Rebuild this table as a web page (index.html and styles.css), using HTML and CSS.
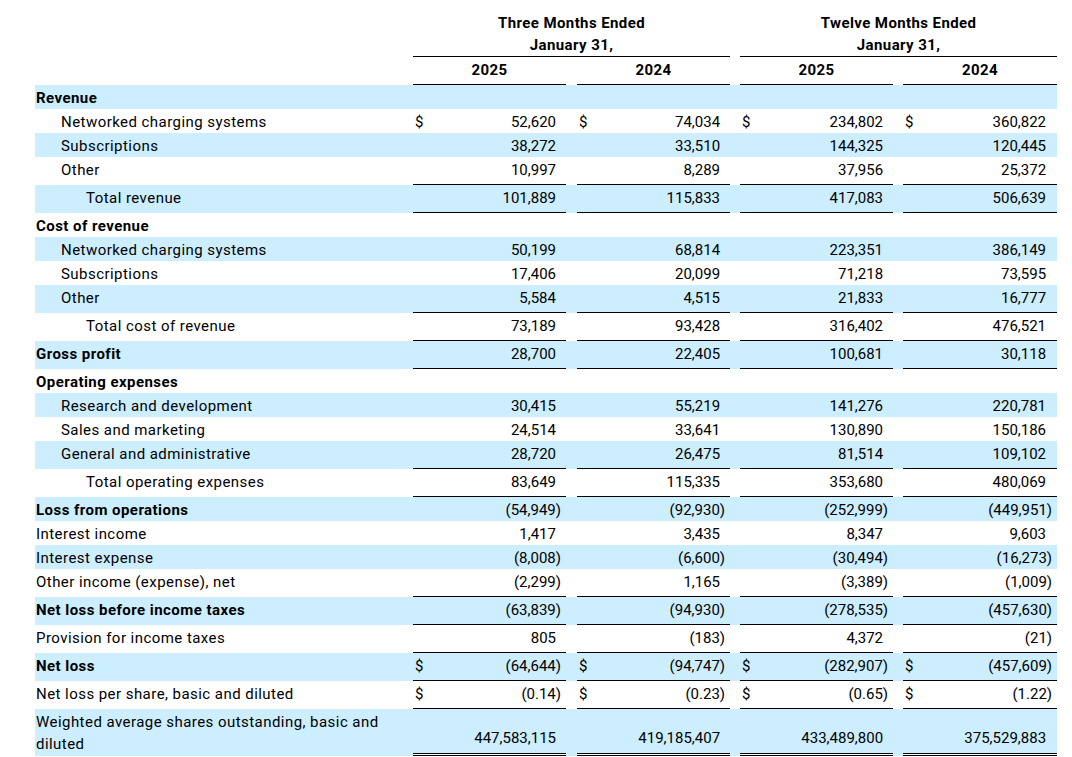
FILE: index.html
```html
<!DOCTYPE html>
<html lang="en">
<head>
  <meta charset="UTF-8" />
  <meta name="viewport" content="width=device-width, initial-scale=1.0" />
  <title>Condensed Consolidated Statements of Operations</title>
  <link rel="stylesheet" href="styles.css">
</head>
<body>
  <table class="ops">
    <colgroup>
      <col class="c-label">
      <col class="c-cur"><col class="c-num">
      <col class="c-gap1">
      <col class="c-cur"><col class="c-num">
      <col class="c-gap">
      <col class="c-cur"><col class="c-num">
      <col class="c-gap">
      <col class="c-cur"><col class="c-num4">
    </colgroup>
    <thead>
      <tr class="head-period">
        <th></th>
        <th colspan="5" class="period">Three Months Ended<br>January 31,</th>
        <th></th>
        <th colspan="5" class="period">Twelve Months Ended<br>January 31,</th>
      </tr>
      <tr class="head-year">
        <th></th>
        <th colspan="2" class="year">2025</th>
        <th></th>
        <th colspan="2" class="year">2024</th>
        <th></th>
        <th colspan="2" class="year">2025</th>
        <th></th>
        <th colspan="2" class="year">2024</th>
      </tr>
    </thead>
    <tbody>
      <tr class="hl">
        <td class="lbl strong">Revenue</td>
        <td class="cur"></td><td class="num"></td><td class="gap"></td>
        <td class="cur"></td><td class="num"></td><td class="gap"></td>
        <td class="cur"></td><td class="num"></td><td class="gap"></td>
        <td class="cur"></td><td class="num"></td>
      </tr>
      <tr>
        <td class="lbl l1">Networked charging systems</td>
        <td class="cur">$</td><td class="num">52,620</td><td class="gap"></td>
        <td class="cur">$</td><td class="num">74,034</td><td class="gap"></td>
        <td class="cur">$</td><td class="num">234,802</td><td class="gap"></td>
        <td class="cur">$</td><td class="num">360,822</td>
      </tr>
      <tr class="hl">
        <td class="lbl l1">Subscriptions</td>
        <td class="cur"></td><td class="num">38,272</td><td class="gap"></td>
        <td class="cur"></td><td class="num">33,510</td><td class="gap"></td>
        <td class="cur"></td><td class="num">144,325</td><td class="gap"></td>
        <td class="cur"></td><td class="num">120,445</td>
      </tr>
      <tr class="rule">
        <td class="lbl l1">Other</td>
        <td class="cur"></td><td class="num">10,997</td><td class="gap"></td>
        <td class="cur"></td><td class="num">8,289</td><td class="gap"></td>
        <td class="cur"></td><td class="num">37,956</td><td class="gap"></td>
        <td class="cur"></td><td class="num">25,372</td>
      </tr>
      <tr class="hl rule">
        <td class="lbl l2">Total revenue</td>
        <td class="cur"></td><td class="num">101,889</td><td class="gap"></td>
        <td class="cur"></td><td class="num">115,833</td><td class="gap"></td>
        <td class="cur"></td><td class="num">417,083</td><td class="gap"></td>
        <td class="cur"></td><td class="num">506,639</td>
      </tr>
      <tr>
        <td class="lbl strong">Cost of revenue</td>
        <td class="cur"></td><td class="num"></td><td class="gap"></td>
        <td class="cur"></td><td class="num"></td><td class="gap"></td>
        <td class="cur"></td><td class="num"></td><td class="gap"></td>
        <td class="cur"></td><td class="num"></td>
      </tr>
      <tr class="hl">
        <td class="lbl l1">Networked charging systems</td>
        <td class="cur"></td><td class="num">50,199</td><td class="gap"></td>
        <td class="cur"></td><td class="num">68,814</td><td class="gap"></td>
        <td class="cur"></td><td class="num">223,351</td><td class="gap"></td>
        <td class="cur"></td><td class="num">386,149</td>
      </tr>
      <tr>
        <td class="lbl l1">Subscriptions</td>
        <td class="cur"></td><td class="num">17,406</td><td class="gap"></td>
        <td class="cur"></td><td class="num">20,099</td><td class="gap"></td>
        <td class="cur"></td><td class="num">71,218</td><td class="gap"></td>
        <td class="cur"></td><td class="num">73,595</td>
      </tr>
      <tr class="hl rule">
        <td class="lbl l1">Other</td>
        <td class="cur"></td><td class="num">5,584</td><td class="gap"></td>
        <td class="cur"></td><td class="num">4,515</td><td class="gap"></td>
        <td class="cur"></td><td class="num">21,833</td><td class="gap"></td>
        <td class="cur"></td><td class="num">16,777</td>
      </tr>
      <tr class="rule">
        <td class="lbl l2">Total cost of revenue</td>
        <td class="cur"></td><td class="num">73,189</td><td class="gap"></td>
        <td class="cur"></td><td class="num">93,428</td><td class="gap"></td>
        <td class="cur"></td><td class="num">316,402</td><td class="gap"></td>
        <td class="cur"></td><td class="num">476,521</td>
      </tr>
      <tr class="hl rule">
        <td class="lbl strong">Gross profit</td>
        <td class="cur"></td><td class="num">28,700</td><td class="gap"></td>
        <td class="cur"></td><td class="num">22,405</td><td class="gap"></td>
        <td class="cur"></td><td class="num">100,681</td><td class="gap"></td>
        <td class="cur"></td><td class="num">30,118</td>
      </tr>
      <tr>
        <td class="lbl strong">Operating expenses</td>
        <td class="cur"></td><td class="num"></td><td class="gap"></td>
        <td class="cur"></td><td class="num"></td><td class="gap"></td>
        <td class="cur"></td><td class="num"></td><td class="gap"></td>
        <td class="cur"></td><td class="num"></td>
      </tr>
      <tr class="hl">
        <td class="lbl l1">Research and development</td>
        <td class="cur"></td><td class="num">30,415</td><td class="gap"></td>
        <td class="cur"></td><td class="num">55,219</td><td class="gap"></td>
        <td class="cur"></td><td class="num">141,276</td><td class="gap"></td>
        <td class="cur"></td><td class="num">220,781</td>
      </tr>
      <tr>
        <td class="lbl l1">Sales and marketing</td>
        <td class="cur"></td><td class="num">24,514</td><td class="gap"></td>
        <td class="cur"></td><td class="num">33,641</td><td class="gap"></td>
        <td class="cur"></td><td class="num">130,890</td><td class="gap"></td>
        <td class="cur"></td><td class="num">150,186</td>
      </tr>
      <tr class="hl rule">
        <td class="lbl l1">General and administrative</td>
        <td class="cur"></td><td class="num">28,720</td><td class="gap"></td>
        <td class="cur"></td><td class="num">26,475</td><td class="gap"></td>
        <td class="cur"></td><td class="num">81,514</td><td class="gap"></td>
        <td class="cur"></td><td class="num">109,102</td>
      </tr>
      <tr class="rule">
        <td class="lbl l2">Total operating expenses</td>
        <td class="cur"></td><td class="num">83,649</td><td class="gap"></td>
        <td class="cur"></td><td class="num">115,335</td><td class="gap"></td>
        <td class="cur"></td><td class="num">353,680</td><td class="gap"></td>
        <td class="cur"></td><td class="num">480,069</td>
      </tr>
      <tr class="hl">
        <td class="lbl strong">Loss from operations</td>
        <td class="cur"></td><td class="num neg">(54,949)</td><td class="gap"></td>
        <td class="cur"></td><td class="num neg">(92,930)</td><td class="gap"></td>
        <td class="cur"></td><td class="num neg">(252,999)</td><td class="gap"></td>
        <td class="cur"></td><td class="num neg">(449,951)</td>
      </tr>
      <tr>
        <td class="lbl">Interest income</td>
        <td class="cur"></td><td class="num">1,417</td><td class="gap"></td>
        <td class="cur"></td><td class="num">3,435</td><td class="gap"></td>
        <td class="cur"></td><td class="num">8,347</td><td class="gap"></td>
        <td class="cur"></td><td class="num">9,603</td>
      </tr>
      <tr class="hl">
        <td class="lbl">Interest expense</td>
        <td class="cur"></td><td class="num neg">(8,008)</td><td class="gap"></td>
        <td class="cur"></td><td class="num neg">(6,600)</td><td class="gap"></td>
        <td class="cur"></td><td class="num neg">(30,494)</td><td class="gap"></td>
        <td class="cur"></td><td class="num neg">(16,273)</td>
      </tr>
      <tr class="rule">
        <td class="lbl">Other income (expense), net</td>
        <td class="cur"></td><td class="num neg">(2,299)</td><td class="gap"></td>
        <td class="cur"></td><td class="num">1,165</td><td class="gap"></td>
        <td class="cur"></td><td class="num neg">(3,389)</td><td class="gap"></td>
        <td class="cur"></td><td class="num neg">(1,009)</td>
      </tr>
      <tr class="hl rule">
        <td class="lbl strong">Net loss before income taxes</td>
        <td class="cur"></td><td class="num neg">(63,839)</td><td class="gap"></td>
        <td class="cur"></td><td class="num neg">(94,930)</td><td class="gap"></td>
        <td class="cur"></td><td class="num neg">(278,535)</td><td class="gap"></td>
        <td class="cur"></td><td class="num neg">(457,630)</td>
      </tr>
      <tr class="rule">
        <td class="lbl">Provision for income taxes</td>
        <td class="cur"></td><td class="num">805</td><td class="gap"></td>
        <td class="cur"></td><td class="num neg">(183)</td><td class="gap"></td>
        <td class="cur"></td><td class="num">4,372</td><td class="gap"></td>
        <td class="cur"></td><td class="num neg">(21)</td>
      </tr>
      <tr class="hl rule">
        <td class="lbl strong">Net loss</td>
        <td class="cur">$</td><td class="num neg">(64,644)</td><td class="gap"></td>
        <td class="cur">$</td><td class="num neg">(94,747)</td><td class="gap"></td>
        <td class="cur">$</td><td class="num neg">(282,907)</td><td class="gap"></td>
        <td class="cur">$</td><td class="num neg">(457,609)</td>
      </tr>
      <tr class="rule">
        <td class="lbl">Net loss per share, basic and diluted</td>
        <td class="cur">$</td><td class="num neg">(0.14)</td><td class="gap"></td>
        <td class="cur">$</td><td class="num neg">(0.23)</td><td class="gap"></td>
        <td class="cur">$</td><td class="num neg">(0.65)</td><td class="gap"></td>
        <td class="cur">$</td><td class="num neg">(1.22)</td>
      </tr>
      <tr class="hl final">
        <td class="lbl wrap">Weighted average shares outstanding, basic and diluted</td>
        <td class="cur"></td><td class="num">447,583,115</td><td class="gap"></td>
        <td class="cur"></td><td class="num">419,185,407</td><td class="gap"></td>
        <td class="cur"></td><td class="num">433,489,800</td><td class="gap"></td>
        <td class="cur"></td><td class="num">375,529,883</td>
      </tr>
    </tbody>
  </table>
</body>
</html>
```

FILE: styles.css
```css
* {
  box-sizing: border-box;
}

body {
  margin: 0;
  background: #fff;
  color: #000;
  font-family: Roboto, "Liberation Sans", Arial, sans-serif;
  font-size: 15px;
}

.ops {
  width: 1022px;
  margin: 11px 0 0 35px;
  border-collapse: separate;
  border-spacing: 0;
  table-layout: fixed;
}

.c-label { width: 378px; }
.c-cur { width: 20px; }
.c-num { width: 133px; }
.c-num4 { width: 134px; }
.c-gap1 { width: 11px; }
.c-gap { width: 10px; }

th, td {
  padding: 2px 0 0;
  line-height: 22px;
  vertical-align: top;
  white-space: nowrap;
}

th {
  font-weight: bold;
  text-align: center;
  letter-spacing: 0.4px;
}

.head-period th {
  padding-top: 1px;
}

.head-period .period {
  border-bottom: 1px solid #000;
}

.head-year th {
  padding-bottom: 3px;
}

.head-year .year {
  border-bottom: 1px solid #000;
}

.hl td {
  background: #cceeff;
}

.lbl {
  padding-left: 1px;
  letter-spacing: 0.45px;
}

.lbl.l1 {
  padding-left: 26px;
}

.lbl.l2 {
  padding-left: 51px;
}

.strong {
  font-weight: bold;
}

.cur {
  padding-left: 2px;
}

.num {
  text-align: right;
  padding-right: 10px;
}

tr td:last-child.num {
  padding-right: 11px;
}

.num.neg,
tr td:last-child.num.neg {
  padding-right: 5px;
}

.rule .cur,
.rule .num {
  border-bottom: 1px solid #000;
  padding-bottom: 3px;
}

.final .lbl.wrap {
  white-space: normal;
  padding-bottom: 1px;
}

.final .cur,
.final .num {
  vertical-align: bottom;
  padding-bottom: 4px;
  border-bottom: 3px double #000;
  background-clip: padding-box;
}
```
